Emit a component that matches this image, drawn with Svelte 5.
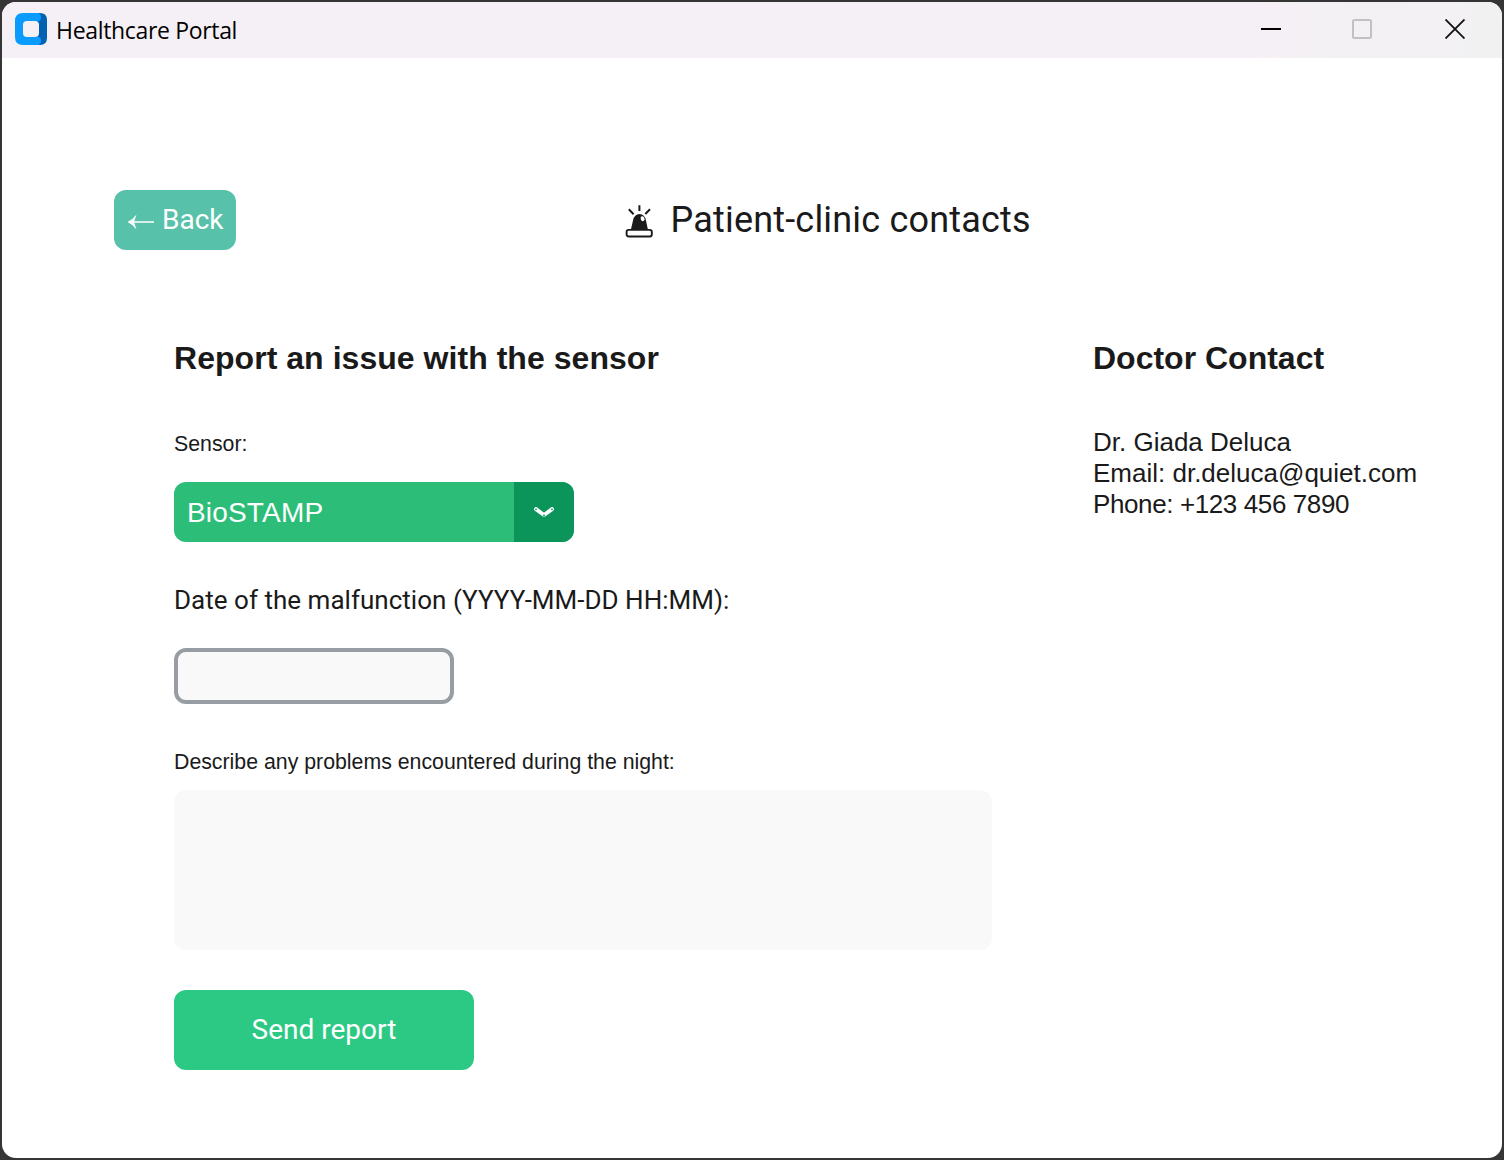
<script>
  const sensor = 'BioSTAMP';
  const contact = [
    { text: 'Dr. Giada Deluca' },
    { text: 'Email: dr.deluca@quiet.com' },
    { text: 'Phone: +123 456 7890', tight: true }
  ];
</script>

<div class="desktop">
  <div class="window">
    <header class="titlebar">
      <svg class="logo" width="32" height="32" viewBox="0 0 32 32">
        <path d="M20 0h5q7 0 7 7v18q0 7-7 7h-5z" fill="#0062b1" />
        <path d="M8 0h15.500q2.500 1 2.500 4 0 4-3.500 4.500L20 9v14l2.500 .5q3.500 .5 3.500 4 0 3.500-2.500 4.500H8q-8 0-8-8V8q0-8 8-8z" fill="#0a9bff" />
        <rect x="8" y="8" width="16" height="16" rx="4" fill="#f5f0f6" />
      </svg>
      <span class="apptitle">Healthcare Portal</span>
      <div class="controls">
        <svg width="20" height="20" viewBox="0 0 20 20"><path d="M0 10h20" stroke="#000" stroke-width="2" /></svg>
        <svg class="max" width="20" height="20" viewBox="0 0 20 20"><rect x="1" y="1" width="18" height="18" rx="1.5" fill="none" stroke="#c4bfc5" stroke-width="2" /></svg>
        <svg width="20" height="20" viewBox="0 0 20 20"><path d="M.5.5l19 19M19.500.5l-19 19" stroke="#111" stroke-width="1.8" /></svg>
      </div>
    </header>
    <main>
      <div class="top">
        <button class="back">
          <svg class="arrow" width="28" height="18" viewBox="0 0 28 18"><path d="M4 9h23" stroke="#fff" stroke-width="1.3" /><path d="M.5 9Q6 6.500 9.500 1.500L7 9l2.500 7.500Q6 11.500 .5 9z" fill="#fff" /></svg>
          <span class="backlabel">Back</span>
        </button>
        <svg class="siren" width="28" height="34" viewBox="0 0 28 34">
          <path d="M5.800 25L8 15.500Q9.300 9 14.500 9t6.500 6.500L23 25z" fill="#1a1a1a" />
          <ellipse cx="17.600" cy="13.700" rx="1.900" ry="2.500" fill="#fff" transform="rotate(-20 17.600 13.700)" />
          <rect x="1.600" y="24.900" width="25.200" height="6.600" rx="2" fill="#fff" stroke="#1a1a1a" stroke-width="1.900" />
          <path d="M14.400 .3v5.700M3.800 4.300L8.600 9.300M25 4.300L20.300 9" stroke="#1a1a1a" stroke-width="2" />
        </svg>
        <h1>Patient-clinic contacts</h1>
      </div>
      <div class="columns">
        <section class="form">
          <h2 class="report">Report an issue with the sensor</h2>
          <span class="small l1">Sensor:</span>
          <div class="combo">
            <span class="value">{sensor}</span>
            <span class="drop">
              <svg width="22" height="12" viewBox="0 0 22 12"><path d="M3 3.200l8 5.800 8-5.800" fill="none" stroke="#fff" stroke-width="4" stroke-linecap="round" stroke-linejoin="round" /><g fill="#0c955a"><circle cx="3" cy="3.300" r=".9" /><circle cx="11" cy="9.400" r="1" /><circle cx="19" cy="3.300" r=".9" /></g></svg>
            </span>
          </div>
          <span class="datelabel">Date of the malfunction (YYYY-MM-DD HH:MM):</span>
          <div class="input"></div>
          <span class="small l2">Describe any problems encountered during the night:</span>
          <div class="area"></div>
          <button class="send">Send report</button>
        </section>
        <section class="doctor">
          <h2>Doctor Contact</h2>
          <div class="info">
            {#each contact as line}<div class:tight={line.tight}>{line.text}</div>{/each}
          </div>
        </section>
      </div>
    </main>
  </div>
</div>

<style>
  :global(body) { margin: 0; background: #353536; }
  .desktop { box-sizing: border-box; width: 1504px; height: 1160px; padding: 2px; background: #353536; }
  .window { height: 1156px; width: 1500px; background: #fff; border-radius: 14px; overflow: hidden; color: #1a1a1a; font-family: "Liberation Sans", Arial, sans-serif; }
  .titlebar { height: 56px; display: flex; background: linear-gradient(100deg, #f5f0f6 80%, #f2f1f2); box-sizing: border-box; padding: 0 37px 0 13px; }
  .logo { margin-top: 11px; }
  .apptitle { margin: 0 0 0 9px; font: 23px/56px "Open Sans", sans-serif; letter-spacing: -0.33px; color: #000; }
  .controls { margin-left: auto; margin-top: 17px; display: flex; }
  .max { margin: 0 73px 0 71px; }
  main { padding: 132px 0 0 112px; }
  .top { display: flex; height: 60px; }
  button { border: 0; padding: 0; color: #fff; }
  .back { width: 122px; height: 60px; border-radius: 12px; background: #58c1a9; display: flex; align-items: center; padding-left: 13px; }
  .arrow { margin-top: 4px; }
  .backlabel { font: 28px/60px Roboto, sans-serif; margin-left: 7px; }
  .siren { margin: 15px 0 0 389px; }
  h1 { margin: 0 0 0 17.5px; font: 36px/60px Roboto, sans-serif; letter-spacing: 0.19px; }
  .columns { display: flex; padding: 86px 0 0 60px; }
  .form { width: 919px; }
  h2 { margin: 0; font-size: 32px; line-height: 44px; }
  .report { letter-spacing: 0.04px; }
  .small { display: block; font-size: 21.3px; line-height: 30px; }
  .l1 { margin-top: 49px; }
  .combo { margin-top: 23px; width: 400px; height: 60px; display: flex; border-radius: 12px; overflow: hidden; background: #2cbe79; color: #fff; }
  .value { width: 340px; padding-left: 13px; box-sizing: border-box; font-size: 28px; line-height: 62px; letter-spacing: 0.18px; }
  .drop { width: 60px; background: #0c955a; display: flex; align-items: center; justify-content: center; }
  .datelabel { display: block; margin-top: 40px; font: 26px/36px Roboto, sans-serif; letter-spacing: 0.02px; }
  .input { margin-top: 30px; width: 280px; height: 56px; box-sizing: border-box; border: 4px solid #979da2; border-radius: 12px; background: #f9f9fa; }
  .l2 { margin-top: 43px; }
  .area { margin-top: 13px; width: 818px; height: 160px; border-radius: 12px; background: #f9f9fa; }
  .send { margin-top: 40px; width: 300px; height: 80px; border-radius: 12px; background: #2cc985; display: block; font: 28px/80px Roboto, sans-serif; }
  .info { margin-top: 47px; font-size: 26px; line-height: 31px; white-space: nowrap; }
  .tight { letter-spacing: -0.39px; }
</style>
